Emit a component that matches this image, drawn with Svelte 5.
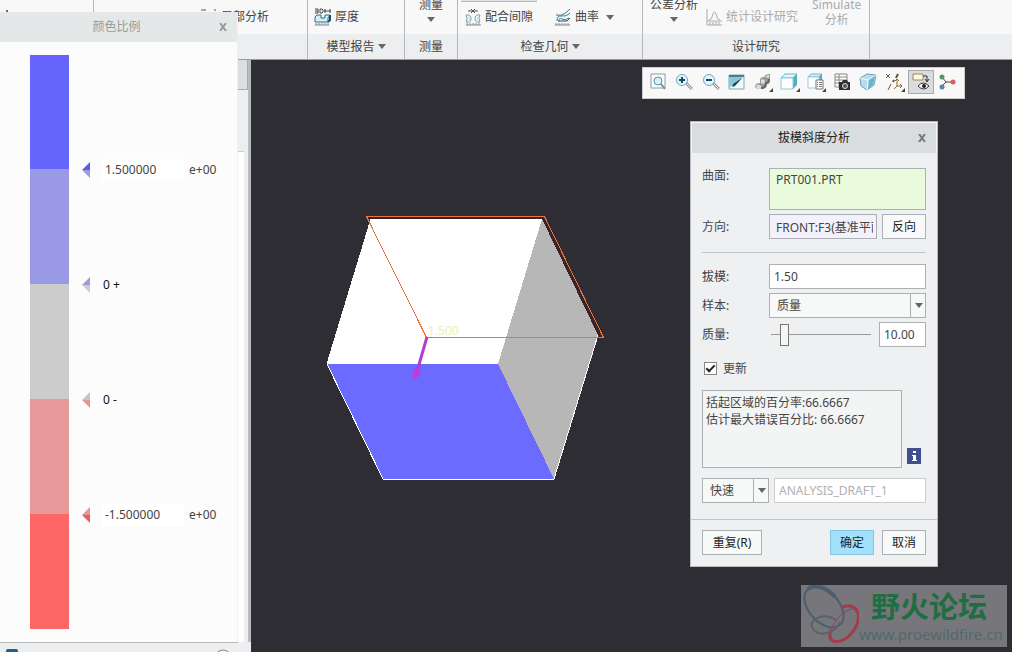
<script lang="ts">
  type Mark = { value: string; exponent?: string; upper: string; lower: string };

  const bands = ["blue", "lilac", "grey", "rose", "red"];

  const marks: Mark[] = [
    { value: "1.500000", exponent: "e+00", upper: "#5f5ce0", lower: "#9c9ae0" },
    { value: "0 +", upper: "#9c9ae0", lower: "#cccccc" },
    { value: "0 -", upper: "#c4c4c4", lower: "#e29797" },
    { value: "-1.500000", exponent: "e+00", upper: "#e29797", lower: "#ee5a5a" },
  ];

  const tools = [
    { id: "fit", label: "重新调整" },
    { id: "zoom-in", label: "放大" },
    { id: "zoom-out", label: "缩小" },
    { id: "repaint", label: "重画" },
    { id: "render", label: "渲染选项", menu: true },
    { id: "style", label: "显示样式", menu: true },
    { id: "views", label: "已保存方向", menu: true },
    { id: "manager", label: "视图管理器" },
    { id: "perspective", label: "透视图" },
    { id: "datum", label: "基准显示", menu: true },
    { id: "notes", label: "注释显示" },
    { id: "spin", label: "旋转中心" },
  ];

  let activeTool = $state("notes");
  let draft = $state("1.50");
  let quality = $state(10);
  let update = $state(true);
</script>

{#snippet caret()}
  <svg class="caret" viewBox="0 0 8 5" aria-hidden="true"><path d="M0 0h8L4 5z" /></svg>
{/snippet}

<div class="app">
  <header class="ribbon">
    <section class="group first">
      <div class="tools">
        <button class="tool clipped" type="button" aria-label="模型">
          <svg width="16" height="16" viewBox="0 0 16 16"><path d="M6 1h2v14H6z" fill="#666" /></svg>
        </button>
        <span class="rule"></span>
        <button class="tool" type="button">
          <svg width="16" height="16" viewBox="0 0 16 16"><path d="M0 1h5M13 1h2M2 5h10v8H2z" fill="none" stroke="#555" /></svg>
          局部分析
        </button>
      </div>
      <h2></h2>
    </section>
    <section class="group report">
      <div class="tools">
        <button class="tool" type="button">
          <svg width="18" height="18" viewBox="0 0 18 18" fill="none">
            <path d="M1 1h3v4H1M1 3h3M6 1v4h2l1-1V2L8 1zM10 3h7M11 1v4M16 1v4" stroke="#444" />
            <path d="M1 9l2-2h4v3h4V7h5l-2 3v4H1z" fill="#d5edf3" stroke="#256f8c" />
            <path d="M16 7v5l-2 2" stroke="#174f68" stroke-width="2" />
            <path d="M1 17h14M2 15v2M5 15v2M8 15v2M11 15v2M14 15v2" stroke="#888" />
          </svg>
          厚度
        </button>
      </div>
      <h2>模型报告 {@render caret()}</h2>
    </section>
    <section class="group measure">
      <div class="tools">
        <button class="tool tall" type="button"><span>测量</span><span>{@render caret()}</span></button>
      </div>
      <h2>测量</h2>
    </section>
    <section class="group geometry">
      <div class="tools">
        <span class="edge"></span>
        <button class="tool" type="button">
          <svg width="16" height="17" viewBox="0 0 16 17" fill="none">
            <path d="M3 2h10M6 0l2 2-2 2M10 0L8 2l2 2" stroke="#555" />
            <path d="M1 6q5-1 5 4 0 4-5 3 2-3 0-7zM15 6q-5-1-5 4 0 4 5 3-2-3 0-7z" fill="#e3eef2" stroke="#7fa5b2" />
            <path d="M1 16h15M2 14v2M5 14v2M8 14v2M11 14v2M14 14v2" stroke="#888" />
          </svg>
          配合间隙
        </button>
        <button class="tool" type="button">
          <svg width="16" height="17" viewBox="0 0 16 17" fill="none">
            <path d="M1 6q5 1 8-1t6-5M2 12q0-6 5-5 4 1 8-3M4 12q0-4 3-2 3 2 7-1" stroke="#347b96" />
            <path d="M3 12h9l3-3" stroke="#234f61" />
            <path d="M0 16h15M1 14v2M4 14v2M7 14v2M10 14v2M13 14v2" stroke="#888" />
          </svg>
          曲率 {@render caret()}
        </button>
      </div>
      <h2>检查几何 {@render caret()}</h2>
    </section>
    <section class="group study">
      <div class="tools">
        <button class="tool tall" type="button"><span>公差分析</span><span>{@render caret()}</span></button>
        <button class="tool" type="button" disabled>
          <svg width="16" height="17" viewBox="0 0 16 17" fill="none" stroke="#aaa">
            <path d="M1 0v16h15M1 12h15M3 11q3 0 4-6 1-4 3 0 1 6 4 6M4 13v3M7 13v3M10 13v3M13 13v3" />
          </svg>
          统计设计研究
        </button>
        <button class="tool tall" type="button" disabled><span>Simulate</span><span>分析</span></button>
      </div>
      <h2>设计研究</h2>
    </section>
    <section class="group rest"><div class="tools"></div><h2></h2></section>
  </header>

  <div class="workspace">
    <aside class="tree"><div class="tree-head"></div><div class="tree-list"></div></aside>
    <main class="canvas">
      <svg class="model" viewBox="310 200 310 290" role="img" aria-label="PRT001">
        <polygon points="366,216 545,216 604,337 598,337 542,219 371,219" fill="#3c2226" />
        <g shape-rendering="crispEdges">
          <polygon points="371,219 542,219 498,364 327,364" fill="#fff" />
          <polygon points="542,219 598,335 554,479 498,364" fill="#b7b7b7" />
          <polygon points="327,364 498,364 554,479 383,479" fill="#6b6bff" />
          <path d="M371 219L327 364L383 479H554L598 335" fill="none" stroke="#fff" />
          <polygon points="366.5,216.5 544.5,216.5 603.5,337.5 426.5,337.5" fill="none" stroke="#e8763a" />
        </g>
        <text x="428" y="335" fill="#eeeeb8">1.500</text>
        <path d="M427 337L418 368" stroke="#b83bd8" stroke-width="3" />
        <path d="M412 372l4-5 5 4-2 5-5 4z" fill="#c03cd6" />
      </svg>
    </main>
  </div>

  <footer class="status">
    <svg width="12" height="14" viewBox="0 0 12 14"><rect width="12" height="14" rx="2" fill="#1f6180" /></svg>
    <svg width="18" height="14" viewBox="0 0 18 14"><circle cx="9" cy="9" r="8" fill="none" stroke="#888" /></svg>
  </footer>

  <section class="scale" aria-label="颜色比例">
    <header class="scale-head">
      <h1>颜色比例</h1>
      <button class="close" type="button" aria-label="关闭">
        <svg width="8" height="8" viewBox="0 0 8 8"><path d="M1 0l6 8M7 0L1 8" /></svg>
      </button>
    </header>
    <div class="scale-body">
      <div class="bar">
        {#each bands as band (band)}
          <span class="band {band}"></span>
        {/each}
      </div>
      <ul class="marks">
        {#each marks as m (m.value)}
          <li>
            <svg width="8" height="16" viewBox="0 0 8 16">
              <path d="M0 8l8-8v8z" fill={m.upper} />
              <path d="M0 8l8 8V8z" fill={m.lower} />
            </svg>
            {#if m.exponent}
              <input aria-label="刻度值" value={m.value} />
              <span>{m.exponent}</span>
            {:else}
              <span class="zero">{m.value}</span>
            {/if}
          </li>
        {/each}
      </ul>
    </div>
  </section>

  <div class="view-bar" role="toolbar" aria-label="视图">
    {#each tools as t (t.id)}
      <button
        type="button"
        aria-label={t.label}
        aria-pressed={activeTool === t.id}
        onclick={() => (activeTool = t.id)}
      >
        <svg width="18" height="18" viewBox="0 0 18 18" fill="none">
          {#if t.id === "fit"}
            <path d="M2 1h14v14H2z" fill="#fff" stroke="#8d989e" />
            <circle cx="9" cy="8" r="4" fill="#d8eff6" stroke="#4d93a8" />
            <path d="M12 11l4 5" stroke="#888" stroke-width="2" />
          {:else if t.id === "zoom-in" || t.id === "zoom-out"}
            <path d="M11 10l6 6" stroke="#999" stroke-width="3" />
            <path d="M12 11l5 5" stroke="#eee" />
            <circle cx="7" cy="7" r="5.5" fill="#e5f6fb" stroke="#6fa9bb" />
            <path d={t.id === "zoom-in" ? "M4 7h6M7 4v6" : "M4 7h6"} stroke="#124b68" stroke-width="2" />
          {:else if t.id === "repaint"}
            <path d="M1 2h15v14H1z" fill="#f4fafb" stroke="#7fa9b7" />
            <path d="M1 15V3h14z" fill="#8cc6d8" />
            <path d="M1 2h15v2H1z" fill="#467f95" />
            <path d="M15 4l-8 9-3 1 1-3z" fill="#144b61" />
          {:else if t.id === "render"}
            <path d="M1 14q0-4 5-4V7q0-3 4-3 1-3 6-3v7q0 3-3 3 0 5-6 5-5 0-6-2z" fill="#9a9a9a" />
            <path d="M2 13q2-3 5 0 2 3-1 3-4 0-4-3zM7 7q2-2 4 1l-1 3-3-1zM11 4q2-2 4-2v3z" fill="#dedede" />
            <path d="M7 15q5 0 5-5 3 0 3-4" stroke="#666" stroke-width="2" />
          {:else if t.id === "style"}
            <path d="M1 5l4-4h12l-4 4z" fill="#e2f6fa" stroke="#65b6ca" />
            <path d="M13 5l4-4v11l-4 4z" fill="#55adc5" />
            <path d="M1 5h12v11H1z" fill="#fff" stroke="#8ccbd9" />
          {:else if t.id === "views"}
            <path d="M1 4l3-3h11l-3 3z" fill="#d4f0f6" stroke="#70b8cb" />
            <path d="M12 4l3-3v10l-3 3z" fill="#55adc5" />
            <path d="M1 4h11v11H1z" fill="#fff" stroke="#9bcbd8" />
            <path d="M9 7h7v9H9z" fill="#fff" stroke="#777" />
            <path d="M10 9.5h1M12 9.5h3M10 11.5h1M12 11.5h3M10 13.5h1M12 13.5h3" stroke="#777" />
          {:else if t.id === "manager"}
            <path d="M2 1h12v13H2zM2 4h12M2 7h12M2 10h12M6 1v13" fill="#fff" stroke="#888" />
            <path d="M6 9h3l1-2h4l1 2h2v8H6z" fill="#303030" />
            <circle cx="12" cy="13" r="2.5" fill="#555" stroke="#ddd" />
          {:else if t.id === "perspective"}
            <path d="M1 5l7-4 9 1-2 10-7 5-6-4z" fill="#b9deea" stroke="#6ba5b9" />
            <path d="M1 5l8 2 8-5M9 7l-1 10" stroke="#e9fafe" />
            <path d="M10 7l6-4-2 9-5 4z" fill="#6fb3ca" />
          {:else if t.id === "datum"}
            <path d="M1 1l4 4M5 1L1 5M13 1l-2 4M9 7l-1 2M6 11l-3 6" stroke="#6f5636" />
            <path d="M13 1l-2 4M9 7l-1 2" stroke="#6f5636" stroke-width="2" />
            <path d="M12 6v7h5M12 13l-3 3M10 8l2-2 2 2M15 11l2 2-2 2" stroke="#8b6c31" />
          {:else if t.id === "notes"}
            <path d="M1 1h10v6H1z" fill="#fff7e6" stroke="#a78557" />
            <path d="M11 3h4v5M13 6l2 3 2-3" stroke="#333" />
            <path d="M6 13q5-6 11 0-5 6-11 0z" fill="#fff" stroke="#333" />
            <circle cx="12" cy="13" r="2" fill="#222" />
          {:else}
            <path d="M4 4l4 5h7M8 9l-5 5" stroke="#444" />
            <circle cx="4" cy="4" r="2.5" fill="#57946d" />
            <circle cx="15" cy="9" r="2.5" fill="#dd5c68" />
            <circle cx="4" cy="14" r="2.5" fill="#5b869d" />
          {/if}
        </svg>
        {#if t.menu}<i class="corner"></i>{/if}
      </button>
    {/each}
  </div>

  <form class="dialog" aria-label="拔模斜度分析" onsubmit={(e) => e.preventDefault()}>
    <header class="dialog-head">
      <h1>拔模斜度分析</h1>
      <button class="close" type="button" aria-label="关闭">
        <svg width="8" height="8" viewBox="0 0 8 8"><path d="M1 0l6 8M7 0L1 8" /></svg>
      </button>
    </header>

    <div class="fields">
      <div class="field top">
        <label for="surface">曲面:</label>
        <textarea id="surface" class="surface" readonly>PRT001.PRT</textarea>
      </div>
      <div class="field">
        <label for="direction">方向:</label>
        <input id="direction" class="direction" value="FRONT:F3(基准平面)" readonly />
        <button class="btn" type="button">反向</button>
      </div>
      <hr />
      <div class="field">
        <label for="draft">拔模:</label>
        <input id="draft" bind:value={draft} />
      </div>
      <div class="field">
        <label for="sample">样本:</label>
        <span class="combo">
          <select id="sample"><option>质量</option><option>数目</option><option>步长</option></select>
          <span class="drop">{@render caret()}</span>
        </span>
      </div>
      <div class="field">
        <label for="quality">质量:</label>
        <input id="quality" type="range" min="0" max="100" bind:value={quality} />
        <input class="amount" aria-label="质量值" value={quality.toFixed(2)} />
      </div>
      <label class="check">
        <input type="checkbox" bind:checked={update} />
        <span>更新</span>
      </label>
      <div class="result">
        <textarea aria-label="结果" readonly>{"括起区域的百分率:66.6667\n估计最大错误百分比: 66.6667"}</textarea>
        <button class="info" type="button" aria-label="信息">
          <svg width="14" height="16" viewBox="0 0 14 16">
            <path d="M6 3h3v2H6zM5 7h4v5h1v1H5v-1h1V8H5z" fill="#fff" />
          </svg>
        </button>
      </div>
      <div class="save">
        <span class="combo quick">
          <select aria-label="分析类型"><option>快速</option><option>已保存</option><option>特征</option></select>
          <span class="drop">{@render caret()}</span>
        </span>
        <input aria-label="分析名称" value="ANALYSIS_DRAFT_1" disabled />
      </div>
    </div>

    <footer class="actions">
      <button class="btn repeat" type="button">重复(R)</button>
      <button class="btn primary" type="submit">确定</button>
      <button class="btn" type="button">取消</button>
    </footer>
  </form>

  <div class="watermark">
    <svg width="58" height="60" viewBox="0 0 58 60" fill="none">
      <g transform="rotate(48 23 22)">
        <ellipse cx="23" cy="22" rx="24" ry="15" stroke="#4c5f72" stroke-width="2" />
        <path d="M-1 22a24 15 0 0 1 24-15" stroke="#4c5f72" stroke-width="4" />
      </g>
      <path d="M41 22C60 16 62 36 50 49 38 61 25 58 30 45" stroke="#a33c48" stroke-width="3" />
      <path d="M30 45C34 32 50 20 55 25" stroke="#a33c48" />
      <path d="M35 35C21 26 6 36 12 44c6 8 22 5 27-7" stroke="#58636b" stroke-width="2" />
    </svg>
    <div class="site">
      <strong>野火论坛</strong>
      <span>www.proewildfire.cn</span>
    </div>
  </div>
</div>

<style>
  :global(body) {
    margin: 0;
    overflow: hidden;
  }

  .app {
    position: relative;
    display: flex;
    flex-direction: column;
    height: 100vh;
    background: #eceeef;
    color: #444;
    font: 12px/16px "Noto Sans", "Noto Sans CJK SC", sans-serif;
  }
  .app * {
    box-sizing: border-box;
  }
  button,
  input,
  select,
  textarea {
    margin: 0;
    font: inherit;
    color: inherit;
    border-radius: 0;
    outline: 0;
  }
  h1,
  h2 {
    margin: 0;
    font-size: 12px;
    font-weight: 400;
  }
  svg {
    display: block;
    flex: none;
  }
  .caret {
    width: 8px;
    height: 5px;
    fill: #666;
  }

  /* ribbon */
  .ribbon {
    display: flex;
    flex: none;
    height: 60px;
    border-bottom: 1px solid #999c9e;
    overflow: hidden;
  }
  .group {
    display: flex;
    flex-direction: column;
    border-right: 1px solid #b5b7b8;
  }
  .tools {
    display: flex;
    align-items: flex-end;
    height: 34px;
    background: #f8f8f8;
  }
  .group h2 {
    display: flex;
    align-items: center;
    justify-content: center;
    gap: 3px;
    height: 25px;
    background: #eceeef;
  }
  .first {
    width: 308px;
  }
  .first .tools {
    justify-content: space-between;
    padding-right: 38px;
  }
  .clipped {
    width: 16px;
  }
  .rule {
    width: 1px;
    height: 34px;
    margin-right: 30px;
    background: #b5b7b8;
  }
  .report {
    width: 97px;
  }
  .report .tools {
    padding-left: 6px;
  }
  .report .tool {
    gap: 3px;
  }
  .measure {
    width: 53px;
  }
  .measure .tools {
    justify-content: center;
  }
  .geometry {
    width: 185px;
  }
  .geometry .tools {
    position: relative;
    gap: 22px;
    padding-left: 7px;
  }
  .edge {
    position: absolute;
    top: 0;
    left: 3px;
    width: 76px;
    height: 2px;
    background: #e2e4e5;
    border-bottom: 1px solid #b5b7b8;
  }
  .study {
    width: 227px;
  }
  .study .tools {
    gap: 8px;
    padding-left: 7px;
  }
  .study .tall:last-child {
    margin-left: 6px;
  }
  .rest {
    flex: 1;
    border-right: 0;
  }
  .tool {
    display: flex;
    align-items: center;
    gap: 4px;
    height: 34px;
    padding: 0;
    border: 0;
    background: none;
    white-space: nowrap;
  }
  .tool .caret {
    margin-left: 3px;
  }
  .tool:disabled {
    color: #aaa;
  }
  .tall {
    flex-direction: column;
    gap: 0;
    height: 37px;
    padding-bottom: 7px;
    line-height: 15px;
  }
  .tall span {
    display: flex;
    align-items: center;
    height: 15px;
  }
  .tall .caret {
    margin: 0;
  }

  /* work area */
  .workspace {
    display: flex;
    flex: 1;
    min-height: 0;
  }
  .tree {
    width: 251px;
    flex: none;
    border-right: 3px solid #b9bcbe;
  }
  .tree-head {
    height: 30px;
    background: #dcdfe0;
    border-right: 1px solid #aaa;
    border-bottom: 1px solid #aaa;
  }
  .tree-list {
    width: 244px;
    height: calc(100% - 91px);
    margin-top: 61px;
    background: #fff;
    border-top: 1px solid #ccc;
  }
  .canvas {
    position: relative;
    flex: 1;
    margin-bottom: -10px;
    background: #2e2d33;
  }
  .model {
    position: absolute;
    top: 140px;
    left: 59px;
    width: 310px;
    height: 290px;
  }
  .status {
    display: flex;
    justify-content: space-between;
    flex: none;
    width: 238px;
    height: 10px;
    padding: 6px 6px 0;
    border-top: 1px solid #bbb;
    overflow: hidden;
  }

  /* colour scale window */
  .scale {
    position: absolute;
    top: 12px;
    bottom: 10px;
    left: 0;
    width: 238px;
    background: #fcfcfc;
    border-right: 1px solid #f0f0f0;
  }
  .scale-head {
    display: flex;
    align-items: center;
    height: 30px;
    padding-right: 10px;
    background: #e5e8e9;
    color: #999;
  }
  .scale-head h1 {
    flex: 1;
    padding-left: 14px;
    text-align: center;
  }
  .close {
    padding: 0;
    border: 0;
    background: none;
  }
  .close path {
    stroke: #777;
    stroke-width: 2;
  }
  .scale-head .close path {
    stroke: #999;
  }
  .scale-body {
    display: flex;
    padding: 13px 0 13px 30px;
  }
  .bar {
    display: flex;
    flex-direction: column;
    width: 39px;
  }
  .band {
    height: 115px;
  }
  .blue {
    height: 114px;
    background: #6666ff;
  }
  .lilac {
    background: #9999e5;
  }
  .grey {
    background: #cccccc;
  }
  .rose {
    background: #e59999;
  }
  .red {
    background: #ff6666;
  }
  .marks {
    margin: 0;
    padding: 57px 0 0 13px;
    list-style: none;
  }
  .marks li {
    display: flex;
    align-items: center;
    height: 115px;
  }
  .marks input {
    width: 82px;
    height: 22px;
    margin: 0 5px 0 12px;
    padding: 0 3px;
    border: 0;
    background: #fff;
  }
  .zero {
    margin-left: 13px;
    color: #111;
  }

  /* view toolbar */
  .view-bar {
    position: absolute;
    top: 67px;
    right: 47px;
    display: flex;
    align-items: center;
    width: 323px;
    height: 32px;
    padding: 0 4px 2px 2px;
    background: #f8f8f8;
    border: 1px solid #ccc;
  }
  .view-bar button {
    position: relative;
    display: flex;
    flex: 1;
    align-items: center;
    justify-content: center;
    height: 24px;
    padding: 0;
    border: 1px solid transparent;
    background: none;
  }
  .view-bar button[aria-pressed="true"] {
    background: #d9dcde;
    border-color: #aaa;
  }
  .corner {
    position: absolute;
    right: 2px;
    bottom: 1px;
    border: 2px solid #444;
    border-top-color: transparent;
    border-left-color: transparent;
  }

  /* analysis window */
  .dialog {
    position: absolute;
    top: 121px;
    right: 74px;
    width: 248px;
    background: #eef0f1;
    border: 1px solid #b8bbbd;
  }
  .dialog-head {
    display: flex;
    align-items: center;
    height: 31px;
    padding-right: 10px;
    border: 1px solid #f4f4f4;
    border-bottom: 0;
    background: #dadddf;
    color: #222;
  }
  .dialog-head h1 {
    flex: 1;
    padding-left: 18px;
    text-align: center;
  }
  .fields {
    display: flex;
    flex-direction: column;
    gap: 4px;
    padding: 15px 11px 16px;
  }
  .field {
    display: flex;
    align-items: center;
    gap: 5px;
    height: 25px;
  }
  .field > label {
    flex: none;
    width: 62px;
  }
  .field.top {
    align-items: flex-start;
    height: 42px;
  }
  .dialog input,
  .dialog textarea,
  .dialog select,
  .btn {
    height: 25px;
    border: 1px solid #adb0b2;
    background: #fff;
  }
  .dialog input {
    flex: 1;
    min-width: 0;
    padding: 0 4px;
  }
  .dialog textarea {
    flex: 1;
    padding: 3px;
    resize: none;
    overflow: hidden;
    line-height: 17px;
  }
  .dialog .surface {
    height: 42px;
    padding: 2px 6px;
    background: #eafbdc;
  }
  .dialog .direction {
    padding: 0 3px 0 6px;
    background: #f3f2fc;
  }
  .btn {
    flex: none;
    width: 44px;
    padding: 0;
    background: #f8f9f9;
    color: #222;
    text-align: center;
  }
  hr {
    width: 100%;
    margin: 9px 0 7px;
    border: 0;
    border-top: 1px solid #c0c3c5;
  }
  .combo {
    display: grid;
    flex: 1;
  }
  .combo select,
  .drop {
    grid-area: 1 / 1;
  }
  .dialog select {
    width: 100%;
    padding: 0 7px;
    appearance: none;
    background: #f7f8f8;
  }
  .drop {
    display: flex;
    align-items: center;
    justify-content: center;
    justify-self: end;
    width: 16px;
    border-left: 1px solid #adb0b2;
    pointer-events: none;
  }
  .dialog input[type="range"] {
    height: 25px;
    margin: 0 3px 0 2px;
    padding: 0;
    border: 0;
    appearance: none;
    background: linear-gradient(#999, #999) center / 100% 1px no-repeat;
  }
  input[type="range"]::-webkit-slider-thumb {
    appearance: none;
    width: 9px;
    height: 22px;
    border: 1px solid #777;
    background: #f4f5f5;
  }
  .dialog .amount {
    flex: none;
    width: 47px;
  }
  .check {
    display: flex;
    align-items: center;
    gap: 6px;
    height: 35px;
    padding-left: 2px;
  }
  .dialog .check input {
    display: grid;
    place-items: center;
    flex: none;
    width: 13px;
    height: 13px;
    padding: 0;
    border-color: #888;
    appearance: none;
  }
  .check input:checked::after {
    content: "";
    width: 7px;
    height: 3px;
    margin-bottom: 3px;
    border: solid #222;
    border-width: 0 0 2px 2px;
    transform: rotate(-45deg);
  }
  .result {
    display: flex;
    align-items: flex-end;
    gap: 5px;
  }
  .dialog .result textarea {
    flex: none;
    width: 200px;
    height: 78px;
    background: #f3f4f4;
  }
  .info {
    width: 14px;
    height: 16px;
    margin-bottom: 4px;
    padding: 0;
    border: 0;
    background: #3d4f8c;
  }
  .save {
    display: flex;
    gap: 5px;
    padding-top: 6px;
  }
  .quick {
    flex: none;
    width: 67px;
  }
  .dialog .save input {
    border-color: #ccc;
    color: #b0b0b0;
  }
  .actions {
    display: flex;
    gap: 8px;
    padding: 10px 11px 11px;
    border-top: 1px solid #c0c3c5;
  }
  .repeat {
    width: 60px;
    margin-right: auto;
  }
  .primary {
    background: #a2e0fb;
    border-color: #86c4e0;
  }

  .watermark {
    position: absolute;
    right: 5px;
    bottom: 5px;
    display: flex;
    width: 206px;
    height: 62px;
    background: #77767a;
  }
  .site {
    display: flex;
    flex-direction: column;
    white-space: nowrap;
  }
  .site strong {
    padding-left: 12px;
    color: #1f6e43;
    font: 700 29px/40px "Noto Sans CJK SC", sans-serif;
  }
  .site span {
    color: #4f6a6c;
    font-size: 15px;
    line-height: 18px;
  }
</style>
